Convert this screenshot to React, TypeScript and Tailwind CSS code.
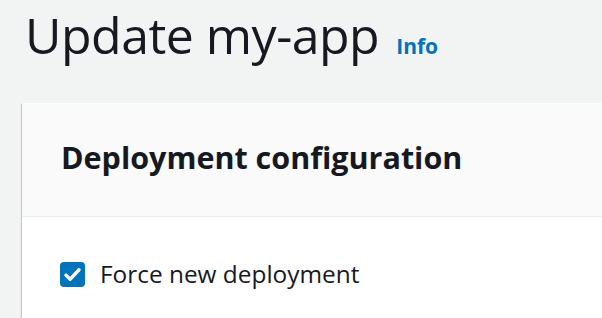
import React from 'react';

export default function App() {
  return (
    <div className="min-h-[318px] w-full overflow-hidden bg-[#f2f3f3] text-[#16191f]" style={{ fontFamily: '"Open Sans", "Noto Sans", Arial, sans-serif' }}>
      <div className="flex items-baseline gap-[17px] pl-[25px] pt-[1px]">
        <h1 className="text-[50px] font-normal leading-[68px] tracking-[-0.5px]">Update my-app</h1>
        <a className="text-[21px] font-bold text-[#0073bb]">Info</a>
      </div>

      {/* Deployment configuration card */}
      <div className="ml-[22px] mt-[34px] w-[620px] bg-white shadow-[0_1px_1px_0_rgba(0,28,36,0.3),1px_1px_1px_0_rgba(0,28,36,0.15),-1px_1px_1px_0_rgba(0,28,36,0.15)]">
        <div className="h-[114px] border-b border-[#eaeded] bg-[#fafafa] pl-[39px] pt-[33px]">
          <h2 className="text-[30.5px] font-bold leading-[42px]">Deployment configuration</h2>
        </div>
        <div className="flex items-center gap-[15px] pl-[38px] pt-[41px] pb-[40px]">
          <span className="flex h-[25px] w-[25px] items-center justify-center rounded-[4px] bg-[#0073bb]">
            <svg width="19" height="19" viewBox="0 0 16 16" fill="none">
              <path d="M2.5 8.5 L6 12 L13.5 4" stroke="white" strokeWidth="2.8" strokeLinecap="round" strokeLinejoin="round" />
            </svg>
          </span>
          <span className="text-[24.4px] leading-[32px]">Force new deployment</span>
        </div>
      </div>
    </div>
  );
}
